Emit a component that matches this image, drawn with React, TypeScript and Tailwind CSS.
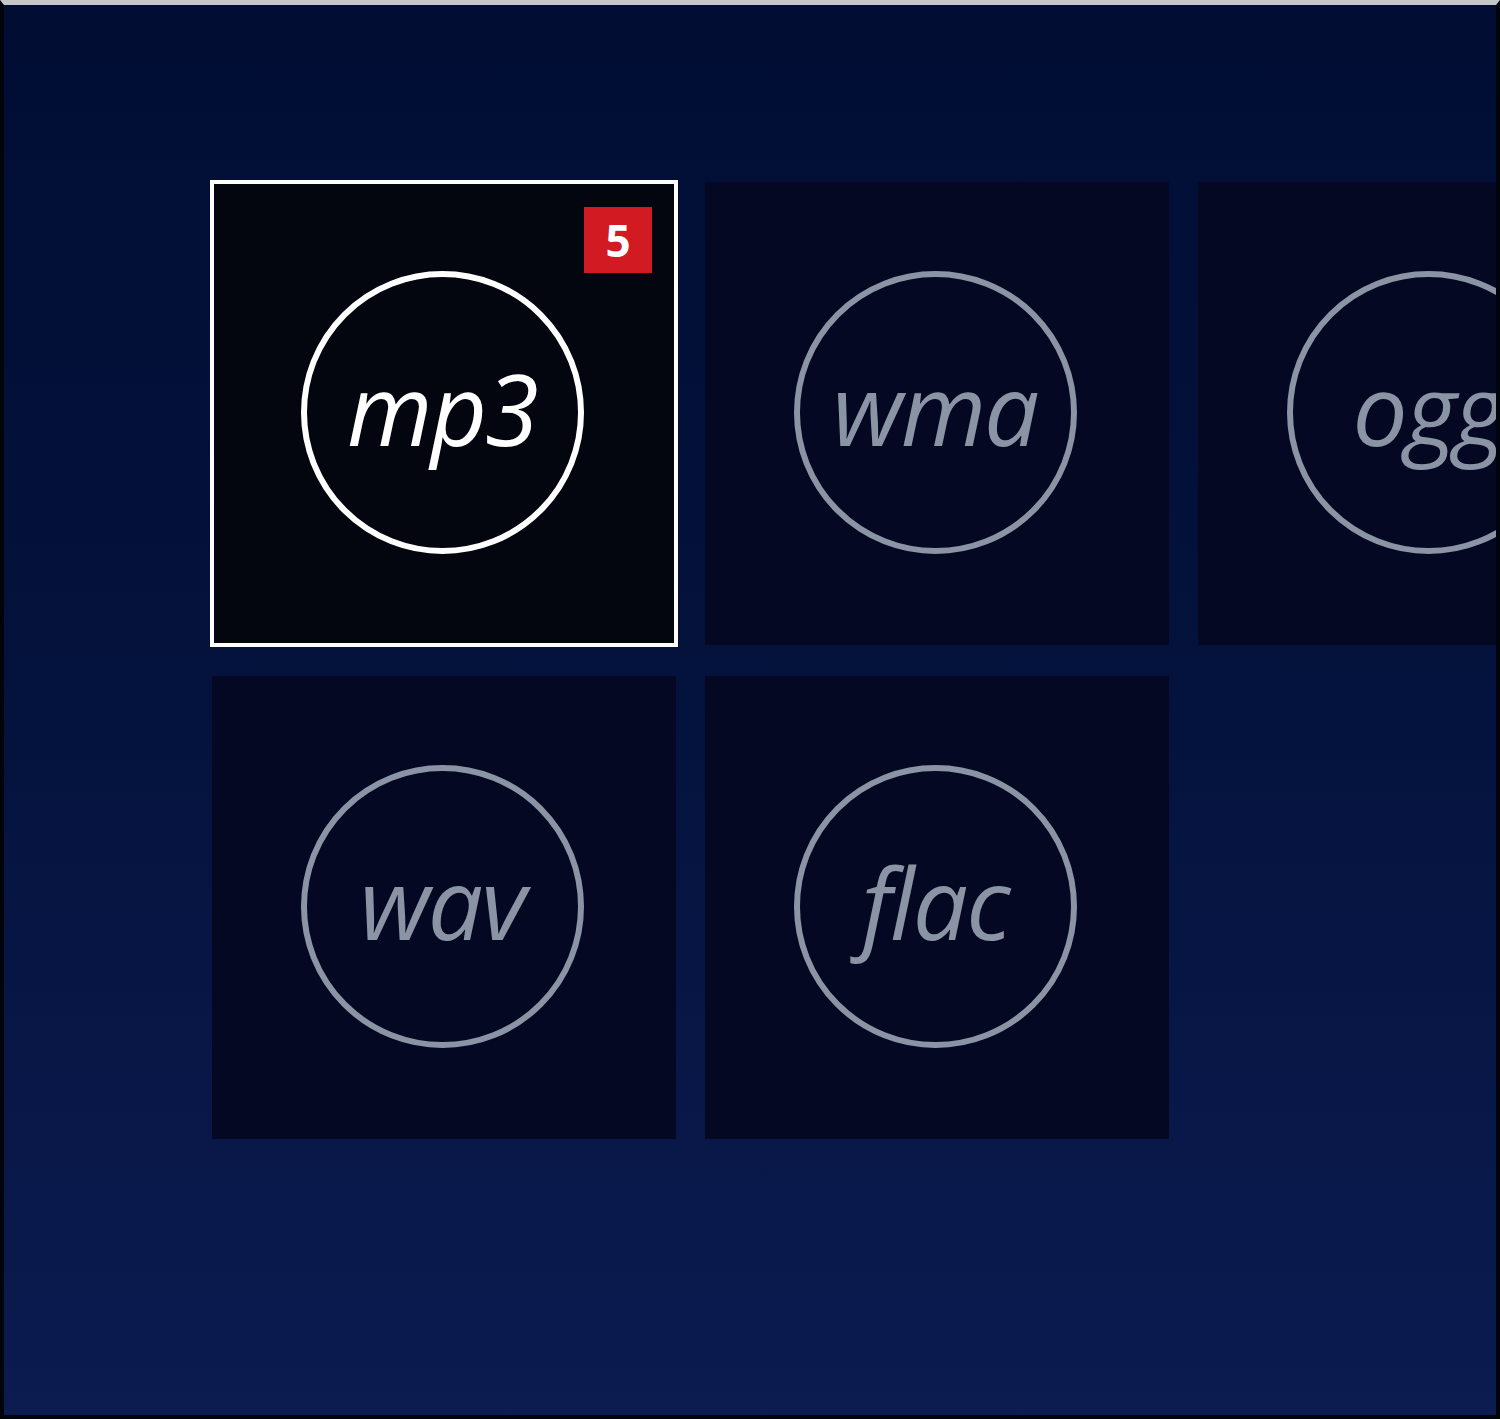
import React from "react";

interface Format {
  name: string;
  badge?: number;
  selected?: boolean;
}

const formats: Format[] = [
  { name: "mp3", badge: 5, selected: true },
  { name: "wma" },
  { name: "ogg" },
  { name: "wav" },
  { name: "flac" },
];

export default function App() {
  return (
    <div className="w-[1500px] h-[1419px] overflow-hidden border-t-[5px] border-t-[#c4c6ca] border-x-4 border-x-[#02040c] border-b-4 border-b-[#02040c] bg-gradient-to-b from-[#010d33] via-[#04133d] to-[#0c1b50]">
      <div className="pl-[208px] pt-[177px]">
        <div className="grid grid-cols-[repeat(3,464px)] gap-x-[29px] gap-y-[31px]">
          {formats.map((f) => (
            <Tile key={f.name} {...f} />
          ))}
        </div>
      </div>
    </div>
  );
}

function Tile({ name, badge, selected }: Format) {
  return (
    <div
      className={`relative h-[463px] flex items-center justify-center ${
        selected ? "bg-[#03050f] outline-4 outline-white -outline-offset-2" : "bg-[#040822]"
      }`}
    >
      {badge != null && (
        <div className="absolute top-[25px] right-[24px] w-[68px] h-[66px] bg-[#d11a22] flex items-center justify-center text-white font-bold text-[44px] leading-none font-['Open_Sans',sans-serif]">
          {badge}
        </div>
      )}
      <div
        className={`w-[283px] h-[283px] -ml-[4px] -mt-[2px] rounded-full border-[6px] flex items-center justify-center ${
          selected ? "border-white text-white" : "border-[#8a94a4] text-[#8a94a4]"
        }`}
      >
        <span className="italic text-[98px] leading-none pb-[10px] font-['Open_Sans',sans-serif] tracking-[-2px]">
          {name}
        </span>
      </div>
    </div>
  );
}
